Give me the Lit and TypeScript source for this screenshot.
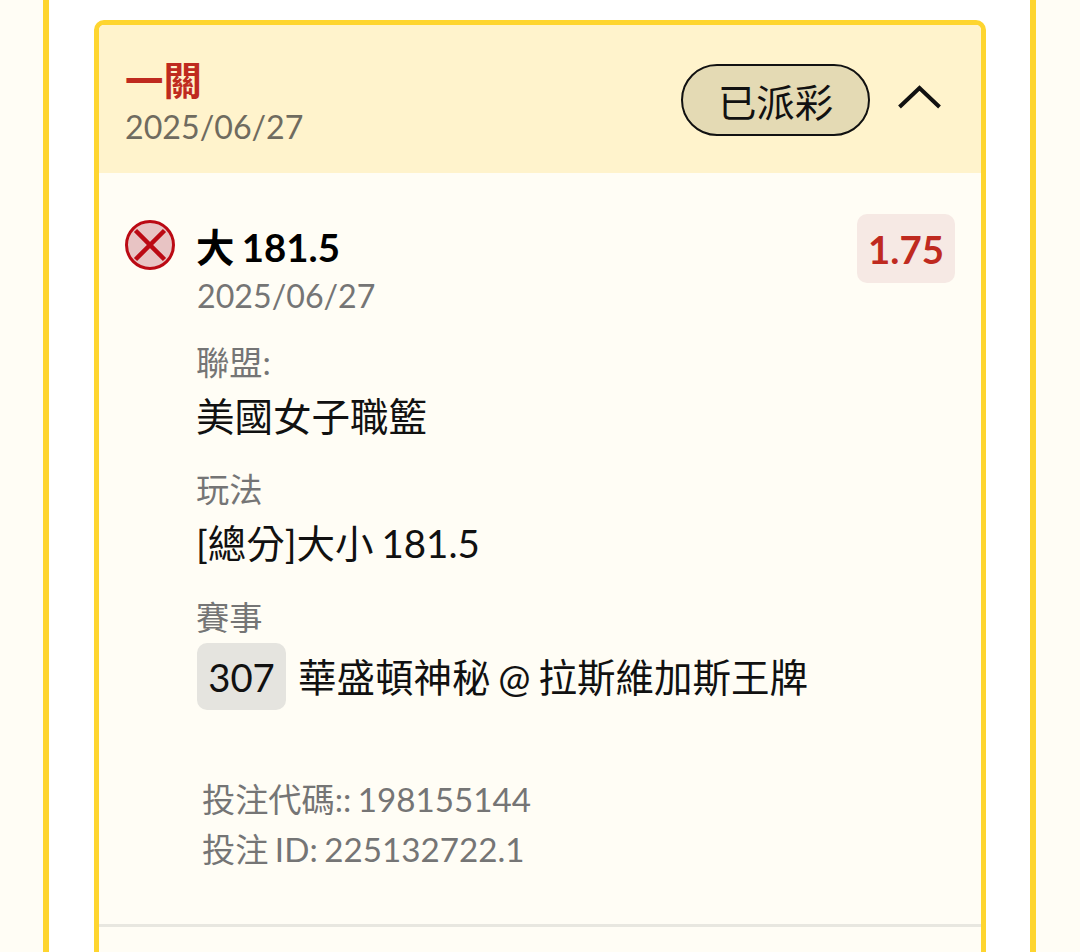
import { LitElement, html, css } from "lit";
import { customElement } from "lit/decorators.js";

@customElement("app-root")
export class AppRoot extends LitElement {
  static styles = css`
    :host {
      display: block;
      height: 952px;
      overflow: hidden;
      background: #fffdf5;
      font-family: Lato, "Noto Sans CJK TC", sans-serif;
      color: #000;
    }
    .frame {
      box-sizing: border-box;
      width: 993px;
      height: 952px;
      margin-left: 43px;
      border-left: 6px solid #fed52f;
      border-right: 6px solid #fed52f;
      background: #fff;
      padding: 20px 44px 0 45px;
    }
    .card {
      box-sizing: border-box;
      height: 960px;
      border: 5px solid #fed52f;
      border-radius: 10px;
      background: #fffdf5;
      overflow: hidden;
    }
    .head {
      height: 148px;
      box-sizing: border-box;
      background: #fff3cc;
      padding: 30px 40px 0 26px;
      display: flex;
      justify-content: space-between;
      align-items: flex-start;
    }
    .leg {
      font-size: 38.4px;
      line-height: 50px;
      font-weight: 700;
      color: #bf2a1f;
    }
    .date {
      font-size: 32.2px;
      line-height: 44px;
      color: #6f6b5f;
    }
    .status {
      display: flex;
      align-items: center;
      gap: 28px;
      margin-top: 9px;
    }
    .pill {
      box-sizing: border-box;
      width: 189px;
      height: 72px;
      border: 2.500px solid #111;
      border-radius: 36px;
      background: #e4dab4;
      display: flex;
      align-items: center;
      justify-content: center;
      font-size: 38.4px;
      color: #111;
    }
    .chev { display: block; margin-top: -5px; }
    .body { padding: 41px 26px 0 26px; }
    .row { display: flex; align-items: flex-start; }
    .icon { flex: none; width: 50px; height: 50px; margin-top: 6px; }
    .main { flex: 1; margin-left: 21px; }
    .top { display: flex; justify-content: space-between; align-items: flex-start; }
    .title { font-size: 38.4px; line-height: 50px; font-weight: 700; margin-top: 8px; word-spacing: -2px; }
    .odds {
      width: 98px;
      height: 69px;
      border-radius: 10px;
      background: #f6e9e4;
      color: #bf2a1f;
      font-size: 38.4px;
      font-weight: 700;
      display: flex;
      align-items: center;
      justify-content: center;
    }
    .subdate { font-size: 32.2px; line-height: 42px; color: #757575; margin: -8px 0 0 1px; }
    .label { font-size: 33.3px; line-height: 42px; color: #757575; margin-bottom: 8px; }
    .value { font-size: 38.5px; line-height: 50px; color: #111; word-spacing: -2px; }
    .block { margin-top: 24px; }
    .block + .block { margin-top: 27px; }
    .block + .block + .block { margin-top: 28px; }
    .match { display: flex; align-items: center; gap: 12px; margin: -3px 0 0 1px; }
    .num {
      width: 89px;
      height: 67px;
      border-radius: 10px;
      background: #e5e4df;
      font-size: 38.3px;
      display: flex;
      align-items: center;
      justify-content: center;
      color: #111;
    }
    .meta { margin: 64px 0 0 6px; font-size: 33.2px; line-height: 50px; color: #757575; word-spacing: -2px; }
    .rule { height: 3px; margin-top: 50px; background: #e8e7e0; }
  `;

  render() {
    return html`
      <div class="frame">
        <div class="card">
          <div class="head">
            <div>
              <div class="leg">一關</div>
              <div class="date">2025/06/27</div>
            </div>
            <div class="status">
              <div class="pill">已派彩</div>
              <svg class="chev" width="43" height="25" viewBox="0 0 43 25" fill="none" stroke="#111" stroke-width="4">
                <path d="M1.500 22 L21.500 3 L41.500 22"></path>
              </svg>
            </div>
          </div>
          <div class="body">
            <div class="row">
              <svg class="icon" viewBox="0 0 50 50">
                <circle cx="25" cy="25" r="23.500" fill="#e8c4c4" stroke="#bb0a14" stroke-width="3"></circle>
                <path d="M10.500 10.500 L39.500 39.500 M39.500 10.500 L10.500 39.500" stroke="#bb0a14" stroke-width="4.500"></path>
              </svg>
              <div class="main">
                <div class="top">
                  <div class="title">大 181.5</div>
                  <div class="odds">1.75</div>
                </div>
                <div class="subdate">2025/06/27</div>
                <div class="block">
                  <div class="label">聯盟:</div>
                  <div class="value">美國女子職籃</div>
                </div>
                <div class="block">
                  <div class="label">玩法</div>
                  <div class="value">[總分]大小 181.5</div>
                </div>
                <div class="block">
                  <div class="label">賽事</div>
                  <div class="match">
                    <div class="num">307</div>
                    <div class="value">華盛頓神秘 @ 拉斯維加斯王牌</div>
                  </div>
                </div>
                <div class="meta">
                  <div>投注代碼:: 198155144</div>
                  <div>投注 ID: 225132722.1</div>
                </div>
              </div>
            </div>
          </div>
          <div class="rule"></div>
        </div>
      </div>
    `;
  }
}
